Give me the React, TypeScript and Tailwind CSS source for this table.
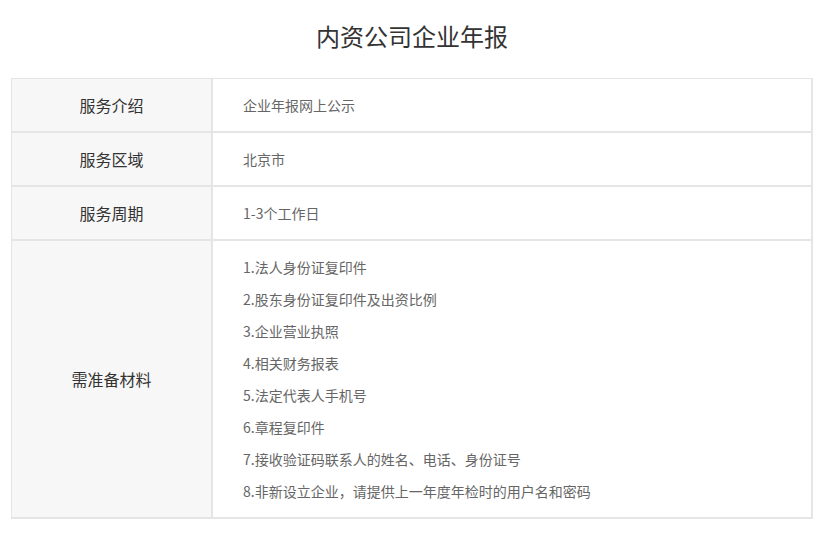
import React from "react";

const rows: { label: string; items: string[] }[] = [
  { label: "服务介绍", items: ["企业年报网上公示"] },
  { label: "服务区域", items: ["北京市"] },
  { label: "服务周期", items: ["1-3个工作日"] },
  {
    label: "需准备材料",
    items: [
      "1.法人身份证复印件",
      "2.股东身份证复印件及出资比例",
      "3.企业营业执照",
      "4.相关财务报表",
      "5.法定代表人手机号",
      "6.章程复印件",
      "7.接收验证码联系人的姓名、电话、身份证号",
      "8.非新设立企业，请提供上一年度年检时的用户名和密码",
    ],
  },
];

export default function App() {
  return (
    <div
      className="w-[824px] h-[533px] bg-white overflow-hidden"
      style={{ fontFamily: '"Noto Sans CJK SC", "Noto Sans", sans-serif' }}
    >
      <h1 className="h-[78px] pt-[18px] text-center text-[24px] leading-[36px] text-[#333]">
        内资公司企业年报
      </h1>
      <div className="ml-[11px] w-[802px] border-l border-t border-[#e5e5e5]">
        {rows.map((r) => (
          <div key={r.label} className="flex">
            <div className="w-[201px] shrink-0 flex items-center justify-center bg-[#f7f7f7] border-r-2 border-b-2 border-[#e5e5e5] text-[16px] text-[#333]">
              {r.label}
            </div>
            <div
              className={
                "flex-1 border-r-2 border-b-2 border-[#e5e5e5] pl-[30px] text-[14px] text-[#666] " +
                (r.items.length > 1 ? "py-[10px]" : "")
              }
            >
              {r.items.map((t) => (
                <div
                  key={t}
                  className={r.items.length > 1 ? "leading-[32px]" : "h-[52px] leading-[52px]"}
                >
                  {t}
                </div>
              ))}
            </div>
          </div>
        ))}
      </div>
    </div>
  );
}
